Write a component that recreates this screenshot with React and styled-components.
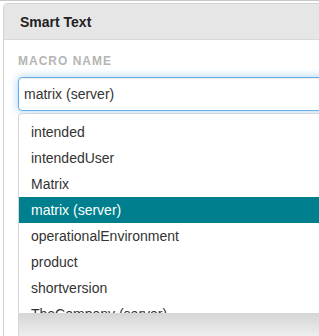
import React from "react";
import styled, { createGlobalStyle } from "styled-components";

const GlobalStyle = createGlobalStyle`
  html, body {
    margin: 0;
    padding: 0;
    background: #ffffff;
    overflow: hidden;
  }
  body {
    font-family: "Liberation Sans", Arial, Helvetica, sans-serif;
    color: #333333;
  }
  * { box-sizing: border-box; }
`;

const Page = styled.div`
  width: 420px;
  height: 336px;
  border-top: 1px solid #c6c6c6;
  padding: 2px 0 0 3px;
`;

const Card = styled.section`
  border: 1px solid #d3d3d3;
  border-radius: 4px;
  background: #ffffff;
  min-height: 420px;
`;

const CardHeader = styled.header`
  background: #e6e6e6;
  border-bottom: 1px solid #d9d9d9;
  border-radius: 3px 3px 0 0;
  padding: 11px 16px 9px;
  font-size: 14px;
  font-weight: 700;
  line-height: 15px;
  color: #222222;
`;

const CardBody = styled.div`
  padding: 13px 14px;
`;

const FieldLabel = styled.label`
  display: block;
  font-size: 12px;
  font-weight: 700;
  line-height: 17px;
  letter-spacing: 1px;
  text-transform: uppercase;
  color: #b5b5b5;
  margin-bottom: 7px;
`;

const Combo = styled.div`
  position: relative;
`;

const TextInput = styled.input`
  display: block;
  width: 100%;
  height: 34px;
  padding: 0 5px;
  border: 1px solid #66afe9;
  border-radius: 4px;
  outline: none;
  background: #ffffff;
  font-family: inherit;
  font-size: 14px;
  color: #333333;
  box-shadow: inset 0 1px 1px rgba(0, 0, 0, 0.075),
    0 0 8px rgba(102, 175, 233, 0.6);
`;

const Menu = styled.div`
  position: absolute;
  top: calc(100% + 2px);
  left: 0;
  right: 0;
  border: 1px solid #d6d6d6;
  border-radius: 4px 4px 0 0;
  background: #ffffff;
`;

const MenuList = styled.ul`
  list-style: none;
  margin: 0;
  padding: 5px 0 0;
  height: 199px;
  overflow: hidden;
`;

const MenuItem = styled.li`
  padding: 3px 12px;
  font-size: 14px;
  line-height: 20px;
  white-space: nowrap;
  color: ${(p) => (p.$active ? "#ffffff" : "#333333")};
  background: ${(p) => (p.$active ? "#00808e" : "transparent")};
`;

const MenuFade = styled.div`
  height: 40px;
  background: linear-gradient(#d5d5d5, #eeeeee 23px, #f4f4f4);
`;

const options = [
  "intended",
  "intendedUser",
  "Matrix",
  "matrix (server)",
  "operationalEnvironment",
  "product",
  "shortversion",
  "TheCompany (server)",
  "version",
];

export default function App() {
  const selected = "matrix (server)";
  return (
    <>
      <GlobalStyle />
      <Page>
        <Card>
          <CardHeader>Smart Text</CardHeader>
          <CardBody>
            <FieldLabel htmlFor="macro-name">Macro Name</FieldLabel>
            <Combo>
              <TextInput id="macro-name" value={selected} readOnly />
              <Menu>
                <MenuList>
                  {options.map((o) => (
                    <MenuItem key={o} $active={o === selected}>
                      {o}
                    </MenuItem>
                  ))}
                </MenuList>
                <MenuFade />
              </Menu>
            </Combo>
          </CardBody>
        </Card>
      </Page>
    </>
  );
}
